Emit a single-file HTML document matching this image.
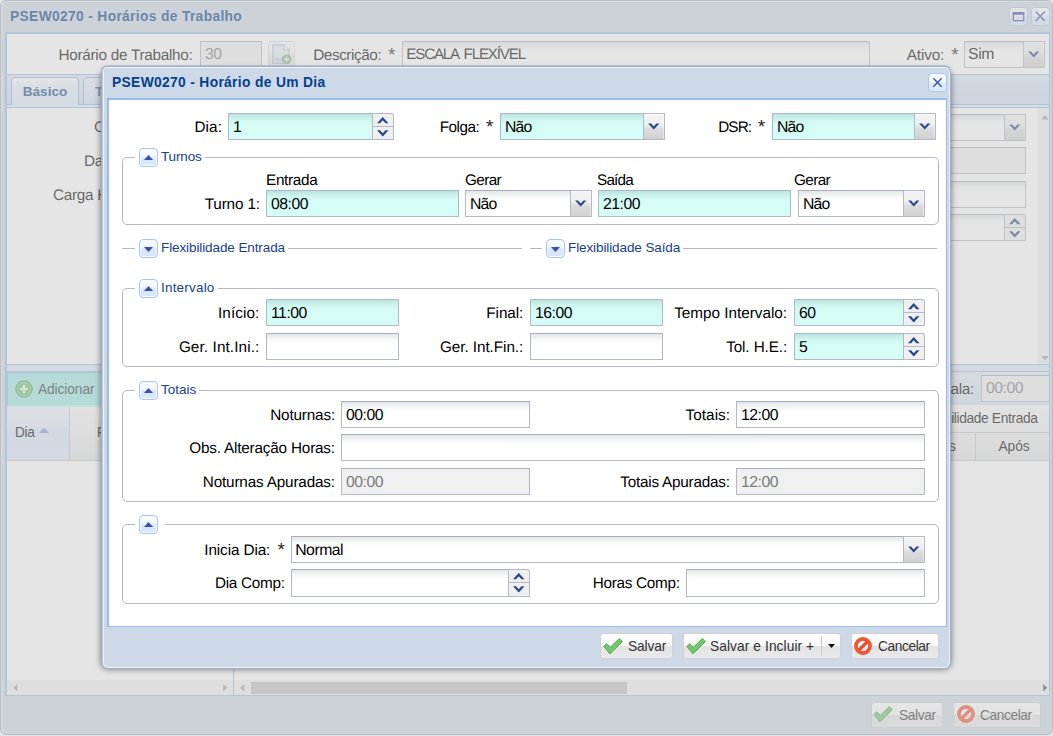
<!DOCTYPE html>
<html lang="pt-BR"><head><meta charset="utf-8"><title>PSEW0270 - Horários de Trabalho</title>
<style>
html,body{margin:0;padding:0}
body{width:1053px;height:736px;overflow:hidden;position:relative;background:#fff;font-family:"Liberation Sans",Arial,sans-serif;font-size:15px;color:#000}
.a{position:absolute;box-sizing:border-box}
.l{position:absolute;width:260px;text-align:right;text-rendering:geometricPrecision;font-size:15.3px;line-height:29px;height:27px;white-space:nowrap;letter-spacing:-.29px}
.ll{position:absolute;text-rendering:geometricPrecision;font-size:15.3px;line-height:20px;white-space:nowrap;letter-spacing:-.29px}
.f{position:absolute;box-sizing:border-box;height:27px;border:1px solid #b5b8c8;border-top-color:#a9adbf;background:#fff linear-gradient(#e3e6e6 0,#eef0f0 3px,#f8f9f9 6px,#fff 10px) no-repeat;background-size:100% 10px;text-rendering:geometricPrecision;font-size:15.8px;line-height:27.4px;padding-left:4px;white-space:nowrap;overflow:hidden;letter-spacing:-.5px}
.req{background:#d6fdf5 linear-gradient(#b9e4dd 0,#c6eee7 3px,#d0f7ef 6px,#d6fdf5 10px) no-repeat;background-size:100% 10px;border-color:#a6bcc6 #a9bdc8 #b5b8c8 #a6bcc6}
.ro{background:#f0f0f0;color:#7b7b7b}
.tr{position:absolute;box-sizing:border-box;width:21px;height:27px;border:1px solid #b5b8c8;border-left:0;background:linear-gradient(#f3f3f3 0,#f0f0f0 40%,#dcdcdc 60%,#d1d1d1 100%);box-shadow:inset -1px 0 0 rgba(255,255,255,.45),inset 0 1px 0 rgba(255,255,255,.5)}
.sp{position:absolute;box-sizing:border-box;width:21px;height:27px;border:1px solid #b5b8c8;border-left:0;background:#f0f0f0;border-top-right-radius:3px}
.sp:after{content:"";position:absolute;left:0;right:0;top:12px;height:1px;background:#b5b8c8}
.fs{position:absolute;box-sizing:border-box;border:1px solid #b5b8c8;border-radius:5px}
.lg{position:absolute;background:#fff;height:20px;font-size:13.5px;line-height:20px;color:#15428b;white-space:nowrap;padding:0 3px 0 26px}
.tg{position:absolute;left:4px;top:1px;width:19px;height:19px;box-sizing:border-box;border:1px solid #a9c7f1;border-radius:4px;background:linear-gradient(#fff 0,#eef5ff 45%,#d6e6fc 55%,#dbe9fd 100%);box-shadow:inset 0 0 0 1px #f4f9ff}
.btn{position:absolute;box-sizing:border-box;height:26px;border:1px solid #d1d1d1;border-radius:3px;background:linear-gradient(#fff 0,#f9f9f9 48%,#e4e4e4 52%,#e9e9e9 100%);font-size:13.75px;line-height:26px;color:#333;white-space:nowrap;letter-spacing:-.3px}
.gh{position:absolute;font-size:13.75px;line-height:18px;white-space:nowrap;letter-spacing:-.1px}
svg{position:absolute;display:block;overflow:visible}
.as{color:#222;font-size:19px;line-height:0;position:relative;top:.5px;letter-spacing:0;margin-left:3px}
</style></head><body>

<!-- ================= BACKGROUND WINDOW ================= -->
<div id="bg" class="a" style="left:0;top:0;width:1053px;height:736px">
 <div class="a" style="left:0;top:0;width:1053px;height:735px;background:#ced9e7;border:1px solid #a2b1c9;border-radius:6px;box-shadow:inset 0 1px 0 #e9eef5,inset 1px 0 0 #e9eef5"></div>
 <div class="a" style="left:10px;top:7px;font-weight:bold;font-size:13.8px;letter-spacing:.34px;line-height:20px;color:#04408c;white-space:nowrap">PSEW0270 - Horários de Trabalho</div>
 <!-- tools -->
 <div class="a" style="left:1009px;top:7px;width:19px;height:19px;border:1px solid #a9c7f1;border-radius:4px;background:linear-gradient(#fff 0,#f4f8ff 45%,#dbe9fd 55%,#e1edfd 100%)"><svg width="17" height="17" viewBox="0 0 17 17" style="left:0;top:0"><rect x="3.3" y="4.7" width="10.4" height="8" fill="none" stroke="#3d55a8" stroke-width="1.3"/><rect x="2.7" y="4.1" width="11.6" height="2.6" fill="#3d55a8"/></svg></div>
 <div class="a" style="left:1031px;top:7px;width:19px;height:19px;border:1px solid #a9c7f1;border-radius:4px;background:linear-gradient(#fff 0,#f4f8ff 45%,#dbe9fd 55%,#e1edfd 100%)"><svg width="17" height="17" viewBox="0 0 17 17" style="left:0;top:0"><path d="M3.6 3.6 L12.8 13 M12.8 3.6 L3.6 13" stroke="#3d55a8" stroke-width="1.45" fill="none"/></svg></div>
 <!-- body -->
 <div class="a" style="left:5px;top:32px;width:1045px;height:664px;background:#fff;border:1px solid #99bbe8;border-left-width:2px;border-top-width:2px"></div>
 <!-- top form row -->
 <div class="l" style="left:-67px;top:41px;letter-spacing:-0.27px;margin-left:-0.47px;color:#000">Horário de Trabalho:</div>
 <div class="f ro" style="left:200px;top:41px;width:62px;padding-left:4px;line-height:25.4px">30</div>
 <div class="a" style="left:268px;top:41px;width:27px;height:27px;border:1px solid #dadada;border-radius:3px;background:linear-gradient(#fdfdfd 0,#f7f7f7 48%,#e6e6e6 52%,#eaeaea 100%)"></div>
 <svg width="20" height="20" viewBox="0 0 20 20" style="left:272px;top:44px;opacity:.6"><path d="M0.9 0.8 H12 L17 5.8 V19.3 H0.9 Z" fill="#dde6f4" stroke="#86a5d0" stroke-width="1.3"/><path d="M12 0.8 V5.8 H17" fill="#eef3fa" stroke="#86a5d0"/><rect x="3" y="14" width="9" height="3" fill="#a9c6ea"/><circle cx="14.6" cy="15.4" r="4.3" fill="#55ab45" stroke="#3c8f31"/><path d="M12.2 15.4 H17 M14.6 13 V17.8" stroke="#fff" stroke-width="1.3"/></svg>
 <div class="l" style="left:135.9px;top:41px;letter-spacing:-0.42px;margin-left:-0.42px">Descrição: <span class="as">*</span></div>
 <div class="f" style="left:402px;top:41px;width:468px;letter-spacing:-1.2px;word-spacing:2.4px;padding-left:3.3px;font-size:15.2px;line-height:25.4px">ESCALA FLEXÍVEL</div>
 <div class="l" style="left:698.9px;top:41px;letter-spacing:-0.13px;margin-left:-0.13px">Ativo: <span class="as">*</span></div>
 <div class="f" style="left:964px;top:41px;width:60px;padding-left:3px;letter-spacing:-.35px;line-height:25.4px">Sim</div>
 <div class="tr" style="left:1024px;top:41px"><svg width="11.5" height="7.5" viewBox="0 0 12 8" style="left:3.6px;top:9px"><path d="M0 0.5 H3.2 L6 3.6 L8.8 0.5 H12 L6 7 Z" fill="#26478d"/></svg></div>
 <!-- tab bar -->
 <div class="a" style="left:7px;top:74px;width:1042px;height:34px;background:linear-gradient(#dde8f5,#cbdbef);border-top:1px solid #99bbe8;border-bottom:1px solid #99bbe8"></div>
 <div class="a" style="left:7px;top:104px;width:1042px;height:4px;background:#deecfd;border-top:1px solid #99bbe8;border-bottom:1px solid #99bbe8"></div>
 <div class="a" style="left:11px;top:77px;width:68px;height:28px;border:1px solid #8db2e3;border-bottom:0;border-radius:5px 5px 0 0;background:linear-gradient(#fff,#e8f0fb 30%,#deecfd);font-weight:bold;font-size:13.6px;line-height:27px;color:#15498b;text-align:center">Básico</div>
 <div class="a" style="left:83px;top:77px;width:90px;height:27px;border:1px solid #8db2e3;border-bottom:0;border-radius:5px 5px 0 0;background:linear-gradient(#e9f1fb,#cfdff3);font-weight:bold;font-size:13.6px;line-height:27px;color:#416da3;padding-left:11px">Turnos</div>
 <!-- tab body labels / fields -->
 <div class="ll" style="left:94px;top:118px">Categoria:</div>
 <div class="ll" style="left:84px;top:152px">Data Início:</div>
 <div class="ll" style="left:53px;top:186px">Carga Horária Semanal:</div>
 <div class="f" style="left:300px;top:114px;width:705px"></div>
 <div class="tr" style="left:1005px;top:114px"><svg width="11.5" height="7.5" viewBox="0 0 12 8" style="left:3.6px;top:9px"><path d="M0 0.5 H3.2 L6 3.6 L8.8 0.5 H12 L6 7 Z" fill="#26478d"/></svg></div>
 <div class="f ro" style="left:300px;top:147px;width:726px"></div>
 <div class="f" style="left:300px;top:181px;width:726px"></div>
 <div class="f" style="left:300px;top:214px;width:705px"></div>
 <div class="sp" style="left:1005px;top:214px"><svg width="11.5" height="22" viewBox="0 0 12 22" style="left:3.6px;top:2px"><path d="M0 7 L6 0.6 L12 7 H8.8 L6 3.9 L3.2 7 Z" fill="#26478d"/><path d="M0 14.5 H3.2 L6 17.6 L8.8 14.5 H12 L6 21 Z" fill="#26478d"/></svg></div>
 <!-- vertical scrollbar of tab body -->
 <div class="a" style="left:1037px;top:108px;width:12px;height:256px;background:#f1f1f1"></div>
 <svg width="8" height="4.5" viewBox="0 0 10 6" style="left:1041px;top:115px"><path d="M0 6 L5 0 L10 6 Z" fill="#a3a3a3"/></svg>
 <svg width="8" height="4.5" viewBox="0 0 10 6" style="left:1041px;top:356px"><path d="M0 0 L5 6 L10 0 Z" fill="#a3a3a3"/></svg>
 <!-- splitter -->
 <div class="a" style="left:7px;top:364px;width:1042px;height:8px;background:#dfe8f6;border-top:1px solid #99bbe8;border-bottom:1px solid #99bbe8"></div>
 <!-- grid toolbar -->
 <div class="a" style="left:7px;top:372px;width:1042px;height:33px;background:linear-gradient(#dfe9f5,#d3e1f1)"></div>
 <div class="a" style="left:7px;top:372px;width:120px;height:33px;background:#9eebe5;border-top:1px solid #8fc4e0;border-left:1px solid #84cfd6"></div>
 <svg width="18" height="18" viewBox="0 0 18 18" style="left:15px;top:380px"><circle cx="9" cy="9" r="8.3" fill="#62bf6a" stroke="#48a852"/><circle cx="9" cy="9" r="6.6" fill="none" stroke="#93d79a" stroke-width="1.2"/><path d="M5 9 H13 M9 5 V13" stroke="#e4f6e6" stroke-width="2.6"/></svg>
 <div class="gh" style="left:38px;top:381px;color:#333">Adicionar</div>
 <div class="l" style="left:714px;top:375px;color:#000">Total Escala:</div>
 <div class="f ro" style="left:981px;top:375px;width:68px;border-right:0;line-height:25.4px">00:00</div>
 <!-- grid header -->
 <div class="a" style="left:7px;top:405px;width:1042px;height:56px;background:linear-gradient(#f9f9f9,#e3e4e6);border-bottom:1px solid #c5c5c5"></div>
 <div class="a" style="left:7px;top:405px;width:63px;height:56px;background:linear-gradient(#ecf3fc 0,#e6eefa 40%,#d8e6fa 41%,#dbe8fb 100%);border-right:1px solid #c5c5c5;border-bottom:1px solid #c5c5c5"></div>
 <div class="a" style="left:7px;top:405px;width:120px;height:2px;background:#b4f1ec"></div>
 <div class="gh" style="left:15px;top:424px;letter-spacing:-.4px">Dia</div>
 <svg width="10" height="5" viewBox="0 0 10 5" style="left:39px;top:428px"><path d="M0 5 L5 0 L10 5 Z" fill="#7b9bd0"/></svg>
 <div class="gh" style="left:97px;top:424px">Folga</div>
  <div class="a" style="left:800px;top:432px;width:249px;height:1px;background:#c5c5c5"></div>
 <div class="a" style="left:975px;top:432px;width:1px;height:28px;background:#c5c5c5"></div>
 <div class="gh" style="left:838px;top:409px;width:199.5px;text-align:right;line-height:20px;letter-spacing:-.36px">Flexibilidade Entrada</div>
 <div class="gh" style="left:913.5px;top:437px;width:50px;text-align:center;line-height:20px">Antes</div>
 <div class="gh" style="left:977.5px;top:437px;width:73px;text-align:center;line-height:20px">Após</div>
 <!-- horizontal scrollbars -->
 <div class="a" style="left:7px;top:680px;width:1042px;height:15px;background:#f1f1f1"></div>
 <div class="a" style="left:251px;top:682px;width:376px;height:12px;background:#c1c1c1"></div>
 <svg width="4.5" height="7.5" viewBox="0 0 5 9" style="left:13px;top:684px"><path d="M5 0 L0 4.5 L5 9 Z" fill="#a3a3a3"/></svg>
 <svg width="4.5" height="7.5" viewBox="0 0 5 9" style="left:223px;top:684px"><path d="M0 0 L5 4.5 L0 9 Z" fill="#a3a3a3"/></svg>
 <svg width="4.5" height="7.5" viewBox="0 0 5 9" style="left:240px;top:684px"><path d="M5 0 L0 4.5 L5 9 Z" fill="#a3a3a3"/></svg>
 <svg width="4.5" height="7.5" viewBox="0 0 5 9" style="left:1043px;top:684px"><path d="M0 0 L5 4.5 L0 9 Z" fill="#505050"/></svg>
 <div class="a" style="left:233px;top:406px;width:1px;height:289px;background:#99bbe8"></div>
 <!-- footer buttons -->
 <div class="btn" style="left:871px;top:702px;width:72px;padding-left:27px;letter-spacing:-.4px">Salvar</div>
 <svg width="20" height="16" viewBox="0 0 20 16" style="left:873px;top:706px"><path d="M0.8 8.3 L3.8 5.7 L7.3 9.3 L16.4 0.5 L19.4 3.6 L7.5 15.5 L6.3 15.3 Z" fill="#74c474" stroke="#4fae50" stroke-width="1" stroke-linejoin="round"/></svg>
 <div class="btn" style="left:953px;top:702px;width:88px;padding-left:26px;letter-spacing:-.42px">Cancelar</div>
 <svg width="18" height="18" viewBox="0 0 18 18" style="left:957px;top:705px"><circle cx="9" cy="9" r="7.1" fill="none" stroke="#ee4b29" stroke-width="3.6"/><path d="M4.6 13.4 L13.4 4.6" stroke="#ee4b29" stroke-width="3.2"/><circle cx="9" cy="9" r="7.4" fill="none" stroke="#f7785a" stroke-width="1" opacity=".6"/></svg>
</div>

<!-- ================= MASK ================= -->
<div class="a" style="left:0;top:0;width:1053px;height:736px;background:#ccc;opacity:.5"></div>

<!-- ================= MODAL ================= -->
<div id="modal" class="a" style="left:0;top:0;width:1053px;height:736px">
 <div class="a" style="left:102px;top:71px;width:848px;height:597px;border-radius:6px;box-shadow:0 0 6px 1px rgba(0,0,0,.5)"></div>
 <div class="a" style="left:101px;top:65px;width:850px;height:604px;background:#ced9e7;border:1px solid #a2b1c9;border-top-color:rgba(162,177,201,.7);border-radius:6px;box-shadow:inset 0 1px 0 #a2b1c9,inset 1px 0 0 #b6c3d7,inset 0 2px 0 #eef3f9,inset 2px 0 0 #eef3f9,inset -1px 0 0 #e9eef6,inset 0 -1px 0 #edf2f9;background-clip:padding-box"></div>
 <div class="a" style="left:112px;top:73px;font-weight:bold;font-size:13.8px;letter-spacing:.34px;line-height:20px;color:#04408c;white-space:nowrap">PSEW0270 - Horário de Um Dia</div>
 <div class="a" style="left:928px;top:73px;width:19px;height:19px;border:1px solid #a9c7f1;border-radius:4px;background:linear-gradient(#fff 0,#f4f8ff 45%,#dbe9fd 55%,#e1edfd 100%)"><svg width="17" height="17" viewBox="0 0 17 17" style="left:0;top:0"><path d="M4.3 4.3 L12.7 12.7 M12.7 4.3 L4.3 12.7" stroke="#3d55a8" stroke-width="1.45" fill="none"/></svg></div>
 <div class="a" style="left:107px;top:98px;width:840px;height:529px;background:#fff;border:1px solid #99bbe8;border-left-width:2px;border-top-width:2px"></div>

 <!-- row 1 -->
 <div class="l" style="left:-38px;top:113px;letter-spacing:0.13px;margin-left:0.13px">Dia:</div>
 <div class="f req" style="left:228px;top:113px;width:145px">1</div>
 <div class="sp" style="left:373px;top:113px"><svg width="11.5" height="22" viewBox="0 0 12 22" style="left:3.6px;top:2px"><path d="M0 7 L6 0.6 L12 7 H8.8 L6 3.9 L3.2 7 Z" fill="#26478d"/><path d="M0 14.5 H3.2 L6 17.6 L8.8 14.5 H12 L6 21 Z" fill="#26478d"/></svg></div>
 <div class="l" style="left:233.9px;top:113px;letter-spacing:-0.50px;margin-left:-0.50px">Folga: <span class="as">*</span></div>
 <div class="f req" style="left:500px;top:113px;width:144px;letter-spacing:-.9px">Não</div>
 <div class="tr" style="left:644px;top:113px"><svg width="11.5" height="7.5" viewBox="0 0 12 8" style="left:3.6px;top:9px"><path d="M0 0.5 H3.2 L6 3.6 L8.8 0.5 H12 L6 7 Z" fill="#26478d"/></svg></div>
 <div class="l" style="left:505.9px;top:113px;letter-spacing:-0.87px;margin-left:-0.87px">DSR: <span class="as">*</span></div>
 <div class="f req" style="left:772px;top:113px;width:143px;letter-spacing:-.9px">Não</div>
 <div class="tr" style="left:915px;top:113px"><svg width="11.5" height="7.5" viewBox="0 0 12 8" style="left:3.6px;top:9px"><path d="M0 0.5 H3.2 L6 3.6 L8.8 0.5 H12 L6 7 Z" fill="#26478d"/></svg></div>

 <!-- Turnos -->
 <div class="fs" style="left:122px;top:157px;width:817px;height:68px"></div>
 <div class="lg" style="left:135px;top:147px"><span class="tg"><svg width="9" height="5" viewBox="0 0 9 5" style="left:4px;top:6px"><path d="M0 5 L4.5 0 L9 5 Z" fill="#3a4fae"/></svg></span><span style="letter-spacing:-.15px">Turnos</span></div>
 <div class="ll" style="left:266px;top:171px;letter-spacing:-0.3px">Entrada</div>
 <div class="ll" style="left:465px;top:171px;letter-spacing:-0.6px">Gerar</div>
 <div class="ll" style="left:597px;top:171px;letter-spacing:-0.8px">Saída</div>
 <div class="ll" style="left:794px;top:171px;letter-spacing:-0.6px">Gerar</div>
 <div class="l" style="left:0px;top:190px;letter-spacing:-0.15px;margin-left:-0.15px">Turno 1:</div>
 <div class="f req" style="left:266px;top:190px;width:193px">08:00</div>
 <div class="f" style="left:465px;top:190px;width:106px;letter-spacing:-.9px">Não</div>
 <div class="tr" style="left:571px;top:190px"><svg width="11.5" height="7.5" viewBox="0 0 12 8" style="left:3.6px;top:9px"><path d="M0 0.5 H3.2 L6 3.6 L8.8 0.5 H12 L6 7 Z" fill="#26478d"/></svg></div>
 <div class="f req" style="left:598px;top:190px;width:193px">21:00</div>
 <div class="f" style="left:798px;top:190px;width:106px;letter-spacing:-.9px">Não</div>
 <div class="tr" style="left:904px;top:190px"><svg width="11.5" height="7.5" viewBox="0 0 12 8" style="left:3.6px;top:9px"><path d="M0 0.5 H3.2 L6 3.6 L8.8 0.5 H12 L6 7 Z" fill="#26478d"/></svg></div>

 <!-- Flexibilidade -->
 <div class="a" style="left:122px;top:248px;width:400px;height:1px;background:#b5b8c8"></div>
 <div class="lg" style="left:135px;top:238px"><span class="tg"><svg width="9" height="5" viewBox="0 0 9 5" style="left:4px;top:7px"><path d="M0 0 L4.5 5 L9 0 Z" fill="#3a4fae"/></svg></span><span style="letter-spacing:-.1px">Flexibilidade Entrada</span></div>
 <div class="a" style="left:530px;top:248px;width:407px;height:1px;background:#b5b8c8"></div>
 <div class="lg" style="left:542px;top:238px"><span class="tg"><svg width="9" height="5" viewBox="0 0 9 5" style="left:4px;top:7px"><path d="M0 0 L4.5 5 L9 0 Z" fill="#3a4fae"/></svg></span><span style="letter-spacing:-.1px">Flexibilidade Saída</span></div>

 <!-- Intervalo -->
 <div class="fs" style="left:122px;top:288px;width:817px;height:79px"></div>
 <div class="lg" style="left:135px;top:278px"><span class="tg"><svg width="9" height="5" viewBox="0 0 9 5" style="left:4px;top:6px"><path d="M0 5 L4.5 0 L9 5 Z" fill="#3a4fae"/></svg></span><span style="letter-spacing:.2px">Intervalo</span></div>
 <div class="l" style="left:-0.3px;top:299px;letter-spacing:0.08px;margin-left:-0.37px">Início:</div>
 <div class="f req" style="left:266px;top:299px;width:133px">11:00</div>
 <div class="l" style="left:263.3px;top:299px;letter-spacing:-0.09px;margin-left:-0.09px">Final:</div>
 <div class="f req" style="left:530px;top:299px;width:133px">16:00</div>
 <div class="l" style="left:527.2px;top:299px;letter-spacing:-0.01px;margin-left:-0.09px">Tempo Intervalo:</div>
 <div class="f req" style="left:794px;top:299px;width:110px">60</div>
 <div class="sp" style="left:904px;top:299px"><svg width="11.5" height="22" viewBox="0 0 12 22" style="left:3.6px;top:2px"><path d="M0 7 L6 0.6 L12 7 H8.8 L6 3.9 L3.2 7 Z" fill="#26478d"/><path d="M0 14.5 H3.2 L6 17.6 L8.8 14.5 H12 L6 21 Z" fill="#26478d"/></svg></div>
 <div class="l" style="left:-0.3px;top:333px;letter-spacing:0.10px;margin-left:-0.37px">Ger. Int.Ini.:</div>
 <div class="f" style="left:266px;top:333px;width:133px"></div>
 <div class="l" style="left:263.3px;top:333px;letter-spacing:-0.06px;margin-left:-0.06px">Ger. Int.Fin.:</div>
 <div class="f" style="left:530px;top:333px;width:133px"></div>
 <div class="l" style="left:527.2px;top:333px;letter-spacing:-0.12px;margin-left:-0.17px">Tol. H.E.:</div>
 <div class="f req" style="left:794px;top:333px;width:110px">5</div>
 <div class="sp" style="left:904px;top:333px"><svg width="11.5" height="22" viewBox="0 0 12 22" style="left:3.6px;top:2px"><path d="M0 7 L6 0.6 L12 7 H8.8 L6 3.9 L3.2 7 Z" fill="#26478d"/><path d="M0 14.5 H3.2 L6 17.6 L8.8 14.5 H12 L6 21 Z" fill="#26478d"/></svg></div>

 <!-- Totais -->
 <div class="fs" style="left:122px;top:390px;width:817px;height:112px"></div>
 <div class="lg" style="left:135px;top:380px"><span class="tg"><svg width="9" height="5" viewBox="0 0 9 5" style="left:4px;top:6px"><path d="M0 5 L4.5 0 L9 5 Z" fill="#3a4fae"/></svg></span>Totais</div>
 <div class="l" style="left:75px;top:401px;letter-spacing:-0.17px;margin-left:-0.04px">Noturnas:</div>
 <div class="f" style="left:341px;top:401px;width:189px">00:00</div>
 <div class="l" style="left:470px;top:401px;letter-spacing:0.03px;margin-left:0.03px">Totais:</div>
 <div class="f" style="left:736px;top:401px;width:189px">12:00</div>
 <div class="l" style="left:75px;top:434px;letter-spacing:-0.19px;margin-left:-0.12px">Obs. Alteração Horas:</div>
 <div class="f" style="left:341px;top:434px;width:584px"></div>
 <div class="l" style="left:75px;top:468px;letter-spacing:-0.17px;margin-left:-0.09px">Noturnas Apuradas:</div>
 <div class="f ro" style="left:341px;top:468px;width:189px">00:00</div>
 <div class="l" style="left:470px;top:468px;letter-spacing:-0.22px;margin-left:-0.22px">Totais Apuradas:</div>
 <div class="f ro" style="left:736px;top:468px;width:189px">12:00</div>

 <!-- last fieldset -->
 <div class="fs" style="left:122px;top:524px;width:817px;height:80px"></div>
 <div class="lg" style="left:135px;top:514px;padding-right:4px"><span class="tg"><svg width="9" height="5" viewBox="0 0 9 5" style="left:4px;top:6px"><path d="M0 5 L4.5 0 L9 5 Z" fill="#3a4fae"/></svg></span></div>
 <div class="l" style="left:24.9px;top:536px;letter-spacing:-0.11px;margin-left:-0.11px">Inicia Dia: <span class="as">*</span></div>
 <div class="f" style="left:291px;top:536px;width:613px;padding-left:3.2px">Normal</div>
 <div class="tr" style="left:904px;top:536px"><svg width="11.5" height="7.5" viewBox="0 0 12 8" style="left:3.6px;top:9px"><path d="M0 0.5 H3.2 L6 3.6 L8.8 0.5 H12 L6 7 Z" fill="#26478d"/></svg></div>
 <div class="l" style="left:25px;top:569px;letter-spacing:-0.27px;margin-left:-0.27px">Dia Comp:</div>
 <div class="f" style="left:291px;top:569px;width:218px;height:28px"></div>
 <div class="sp" style="left:509px;top:569px;height:28px"><svg width="11.5" height="22" viewBox="0 0 12 22" style="left:3.6px;top:2px"><path d="M0 7 L6 0.6 L12 7 H8.8 L6 3.9 L3.2 7 Z" fill="#26478d"/><path d="M0 14.5 H3.2 L6 17.6 L8.8 14.5 H12 L6 21 Z" fill="#26478d"/></svg></div>
 <div class="l" style="left:420px;top:569px;letter-spacing:-0.29px;margin-left:-0.29px">Horas Comp:</div>
 <div class="f" style="left:686px;top:569px;width:239px;height:28px"></div>

 <!-- buttons -->
 <div class="btn" style="left:600px;top:633px;width:73px;padding-left:27px;letter-spacing:-.15px">Salvar</div>
 <svg width="20" height="16" viewBox="0 0 20 16" style="left:603px;top:638px"><path d="M0.8 8.3 L3.8 5.7 L7.3 9.3 L16.4 0.5 L19.4 3.6 L7.5 15.5 L6.3 15.3 Z" fill="#74c474" stroke="#4fae50" stroke-width="1" stroke-linejoin="round"/></svg>
 <div class="btn" style="left:683px;top:633px;width:158px;padding-left:26px;letter-spacing:.08px">Salvar e Incluir +</div>
 <svg width="20" height="16" viewBox="0 0 20 16" style="left:686px;top:638px"><path d="M0.8 8.3 L3.8 5.7 L7.3 9.3 L16.4 0.5 L19.4 3.6 L7.5 15.5 L6.3 15.3 Z" fill="#74c474" stroke="#4fae50" stroke-width="1" stroke-linejoin="round"/></svg>
 <div class="a" style="left:821px;top:636px;width:1px;height:20px;background:#c9c9c9"></div>
 <svg width="7" height="4" viewBox="0 0 7 4" style="left:828px;top:644px"><path d="M0 0 H7 L3.5 4 Z" fill="#111"/></svg>
 <div class="btn" style="left:851px;top:633px;width:88px;padding-left:26px;letter-spacing:-.42px">Cancelar</div>
 <svg width="18" height="18" viewBox="0 0 18 18" style="left:854px;top:637px"><circle cx="9" cy="9" r="7.1" fill="none" stroke="#ee4b29" stroke-width="3.6"/><path d="M4.6 13.4 L13.4 4.6" stroke="#ee4b29" stroke-width="3.2"/><circle cx="9" cy="9" r="7.4" fill="none" stroke="#f7785a" stroke-width="1" opacity=".6"/></svg>
</div>
</body></html>
